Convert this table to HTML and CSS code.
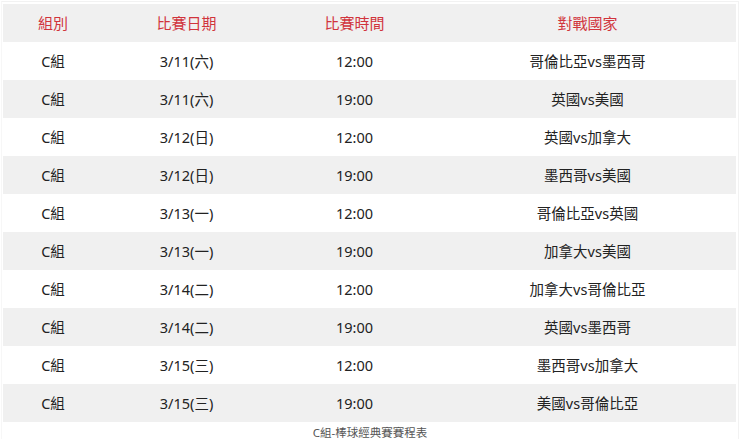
FILE: index.html
```html
<!DOCTYPE html>
<html lang="zh-Hant">
<head>
<meta charset="utf-8">
<link rel="stylesheet" href="styles.css">
</head>
<body>
<div class="wrap">
  <table class="schedule">
    <colgroup>
      <col class="c1"><col class="c2"><col class="c3"><col class="c4">
    </colgroup>
    <thead>
      <tr><th>組別</th><th>比賽日期</th><th>比賽時間</th><th>對戰國家</th></tr>
    </thead>
    <tbody>
      <tr><td>C組</td><td>3/11(六)</td><td>12:00</td><td>哥倫比亞vs墨西哥</td></tr>
      <tr><td>C組</td><td>3/11(六)</td><td>19:00</td><td>英國vs美國</td></tr>
      <tr><td>C組</td><td>3/12(日)</td><td>12:00</td><td>英國vs加拿大</td></tr>
      <tr><td>C組</td><td>3/12(日)</td><td>19:00</td><td>墨西哥vs美國</td></tr>
      <tr><td>C組</td><td>3/13(一)</td><td>12:00</td><td>哥倫比亞vs英國</td></tr>
      <tr><td>C組</td><td>3/13(一)</td><td>19:00</td><td>加拿大vs美國</td></tr>
      <tr><td>C組</td><td>3/14(二)</td><td>12:00</td><td>加拿大vs哥倫比亞</td></tr>
      <tr><td>C組</td><td>3/14(二)</td><td>19:00</td><td>英國vs墨西哥</td></tr>
      <tr><td>C組</td><td>3/15(三)</td><td>12:00</td><td>墨西哥vs加拿大</td></tr>
      <tr><td>C組</td><td>3/15(三)</td><td>19:00</td><td>美國vs哥倫比亞</td></tr>
    </tbody>
  </table>
  <p class="caption">C組-棒球經典賽賽程表</p>
</div>
</body>
</html>
```

FILE: styles.css
```css
html, body {
  margin: 0;
  padding: 0;
  background: #ffffff;
}

body {
  font-family: "Noto Sans", "Noto Sans CJK TC", sans-serif;
  color: #222222;
}

.wrap {
  margin: 1px 1px 0 1px;
  border-top: 1px solid #f2f2f2;
  border-left: 1px solid #f7f7f7;
  border-right: 1px solid #f2f2f2;
  padding: 2px 1px 0 1px;
}

.schedule {
  width: 733px;
  border-collapse: collapse;
  table-layout: fixed;
}

.c1 { width: 100px; }
.c2 { width: 167px; }
.c3 { width: 169px; }
.c4 { width: 297px; }

.schedule th,
.schedule td {
  height: 38px;
  padding: 0;
  text-align: center;
  vertical-align: middle;
  font-size: 14.5px;
  line-height: 20px;
  font-weight: 400;
}

.schedule th {
  background: #f0f0f0;
  color: #d1343c;
  font-size: 15px;
}

.schedule tbody tr:nth-child(even) td {
  background: #f0f0f0;
}

.caption {
  margin: 0;
  padding-top: 3px;
  text-align: center;
  font-size: 11.5px;
  line-height: 15px;
  color: #555555;
}
```
